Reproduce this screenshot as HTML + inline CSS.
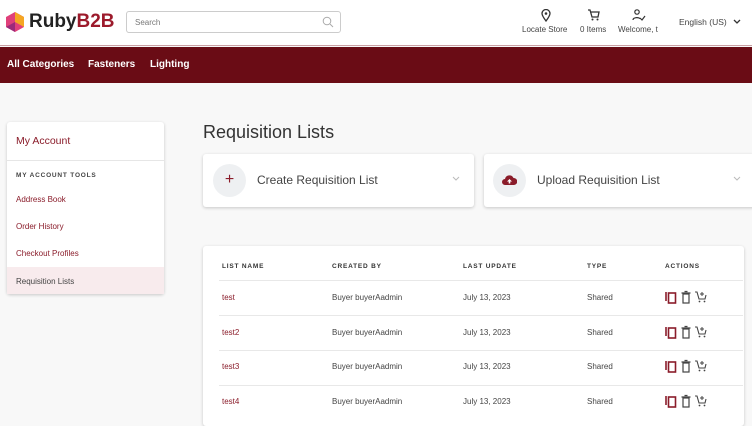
<!DOCTYPE html><html><head><style>
*{box-sizing:border-box;margin:0;padding:0}
body{width:752px;height:418px;overflow:hidden;background:#f8f8f8;font-family:"Liberation Sans",Arial,sans-serif;position:relative;color:#333}
.a{position:absolute}
.hdr{left:0;top:0;width:752px;height:46px;background:#fff;border-bottom:1px solid #c9a0a4}
.nav{left:0;top:47px;width:752px;height:36px;background:#6a0c15;color:#fff;font-weight:bold;font-size:10px}
.nav span{position:absolute;top:12px}
.card{background:#fff;border-radius:3px;box-shadow:0 1px 3px rgba(0,0,0,.2)}
.side a{position:absolute;left:9px;font-size:8px;color:#8a1c2a;text-decoration:none}
.th{font-size:6.5px;font-weight:bold;letter-spacing:.8px;color:#333;top:17px}
.td{font-size:8px;color:#444}
.ln{color:#8a1c2a}
.sep{left:16px;width:524px;height:1px;background:#e8e8e8}
</style></head><body>
<div class="a hdr">
 <svg class="a" style="left:6px;top:12px" width="18" height="20" viewBox="0 0 18 20"><polygon points="9,0 18,5 18,15 9,20 0,15 0,5" fill="#e0407a"/><polygon points="9,0 18,5 18,15 9,10" fill="#f5a623"/><polygon points="0,15 9,10 9,20" fill="#9b2a7a"/></svg>
 <div class="a" style="left:29px;top:11px;font-size:19px;font-weight:bold;color:#222">Ruby<span style="color:#9c1a2b">B2B</span></div>
 <div class="a" style="left:126px;top:11px;width:215px;height:22px;border:1px solid #ccc;border-radius:3px;font-size:8px;color:#777;padding:6px 8px">Search
  <svg class="a" style="right:6px;top:4px" width="12" height="12" viewBox="0 0 12 12"><circle cx="5" cy="5" r="3.8" fill="none" stroke="#aaa" stroke-width="1"/><line x1="8" y1="8" x2="11" y2="11" stroke="#aaa"/></svg></div>
 <svg class="a" style="left:540px;top:9px" width="12" height="13" viewBox="0 0 12 13"><path d="M6 12C3 8 2 6 2 4.5a4 4 0 0 1 8 0C10 6 9 8 6 12z" fill="none" stroke="#333" stroke-width="1.3"/><circle cx="6" cy="4.5" r="1.3" fill="#333"/></svg>
 <div class="a" style="left:522px;top:25px;font-size:8px;color:#444">Locate Store</div>
 <svg class="a" style="left:587px;top:9px" width="13" height="12" viewBox="0 0 13 12"><path d="M1 1h2l2 7h6l1-5H4" fill="none" stroke="#333" stroke-width="1.3"/><circle cx="5.5" cy="10.5" r="1" fill="#333"/><circle cx="10.5" cy="10.5" r="1" fill="#333"/></svg>
 <div class="a" style="left:580px;top:25px;font-size:8px;color:#444">0 Items</div>
 <svg class="a" style="left:632px;top:9px" width="14" height="12" viewBox="0 0 14 12"><circle cx="5" cy="3" r="2.2" fill="none" stroke="#333" stroke-width="1.2"/><path d="M1 11c0-3 7-3 7-1M8 9l2 2 3-4" fill="none" stroke="#333" stroke-width="1.2"/></svg>
 <div class="a" style="left:618px;top:25px;font-size:8px;color:#444">Welcome, t</div>
 <div class="a" style="left:679px;top:17px;font-size:8.5px;color:#444">English (US)</div>
 <svg class="a" style="left:733px;top:19px" width="8" height="6" viewBox="0 0 8 6"><path d="M1 1l3 3 3-3" fill="none" stroke="#333" stroke-width="1.3"/></svg>
</div>
<div class="a nav"><span style="left:7px">All Categories</span><span style="left:88px">Fasteners</span><span style="left:150px">Lighting</span></div>

<div class="a card side" style="left:7px;top:122px;width:157px;height:172px">
 <div class="a" style="left:9px;top:13px;font-size:10.5px;color:#8a1c2a">My Account</div>
 <div class="a" style="left:0;top:38px;width:157px;height:1px;background:#e6e6e6"></div>
 <div class="a" style="left:9px;top:50px;font-size:6.5px;font-weight:bold;letter-spacing:.8px;color:#444">MY ACCOUNT TOOLS</div>
 <a style="top:73px">Address Book</a><a style="top:100px">Order History</a><a style="top:127px">Checkout Profiles</a>
 <div class="a" style="left:0;top:145px;width:157px;height:27px;background:#f8ebed"></div>
 <a style="top:155px;color:#444">Requisition Lists</a>
</div>

<div class="a" style="left:203px;top:122px;font-size:18px;color:#333">Requisition Lists</div>
<div class="a card" style="left:203px;top:154px;width:271px;height:53px">
 <div class="a" style="left:10px;top:10px;width:33px;height:33px;border-radius:50%;background:#eef0f2;color:#8a1c2a;font-size:16px;text-align:center;line-height:32px">+</div>
 <div class="a" style="left:54px;top:19px;font-size:12px;color:#444">Create Requisition List</div>
 <svg class="a" style="left:249px;top:22px" width="8" height="5" viewBox="0 0 8 5"><path d="M1 1l3 3 3-3" fill="none" stroke="#bbb"/></svg>
</div>
<div class="a card" style="left:484px;top:154px;width:272px;height:53px">
 <div class="a" style="left:9px;top:10px;width:33px;height:33px;border-radius:50%;background:#eef0f2"></div>
 <svg class="a" style="left:18px;top:21px" width="15" height="11" viewBox="0 0 15 11"><path d="M3 10a3 3 0 0 1 0-6 4.5 4.5 0 0 1 8.5-1A3.5 3.5 0 0 1 12 10z" fill="#8a1c2a"/><path d="M7.5 4l-2.5 2.5h1.7v2h1.6v-2H10z" fill="#fff"/></svg>
 <div class="a" style="left:53px;top:19px;font-size:12px;color:#444">Upload Requisition List</div>
 <svg class="a" style="left:249px;top:22px" width="8" height="5" viewBox="0 0 8 5"><path d="M1 1l3 3 3-3" fill="none" stroke="#bbb"/></svg>
</div>

<div class="a card" style="left:203px;top:246px;width:541px;height:180px">
 <div class="a th" style="left:19px">LIST NAME</div><div class="a th" style="left:129px">CREATED BY</div><div class="a th" style="left:260px">LAST UPDATE</div><div class="a th" style="left:384px">TYPE</div><div class="a th" style="left:462px">ACTIONS</div>
 <div class="a sep" style="top:34px"></div><div class="a sep" style="top:69px"></div><div class="a sep" style="top:104px"></div><div class="a sep" style="top:139px"></div>
</div>
<div id="rows"></div>
<script>
var names=["test","test2","test3","test4"],h="";
names.forEach(function(n,i){var y=293+i*34.7;
h+='<div class="a td ln" style="left:222px;top:'+y+'px">'+n+'</div><div class="a td" style="left:332px;top:'+y+'px">Buyer buyerAadmin</div><div class="a td" style="left:463px;top:'+y+'px">July 13, 2023</div><div class="a td" style="left:587px;top:'+y+'px">Shared</div>'+
'<svg class="a" style="left:665px;top:'+(y-3)+'px" width="44" height="14" viewBox="0 0 44 14"><path d="M1 2v9" stroke="#8a1c2a" stroke-width="1.6"/><rect x="3.5" y="3" width="7" height="10" fill="none" stroke="#8a1c2a" stroke-width="1.6"/><rect x="18" y="4" width="6" height="9" fill="none" stroke="#444" stroke-width="1.2"/><path d="M16.5 3h9M19.5 1.5h3" stroke="#444" stroke-width="1.2"/><path d="M30 2h2l2 7h6l1-4" fill="none" stroke="#444" stroke-width="1.1"/><path d="M37 2v4M35 4h4" stroke="#444" stroke-width="1"/><circle cx="34.5" cy="11.5" r=".9" fill="#444"/><circle cx="39.5" cy="11.5" r=".9" fill="#444"/></svg>';});
document.getElementById("rows").innerHTML=h;
</script>
</body></html>
